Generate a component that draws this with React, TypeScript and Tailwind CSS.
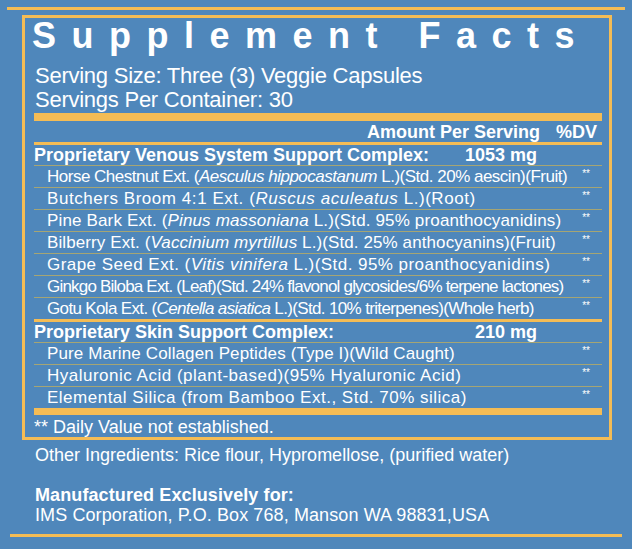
import React from "react";

type Part = { t: string; i?: boolean };

type Ingredient = {
  parts: Part[];
  track: string;
};

const venous: Ingredient[] = [
  {
    parts: [
      { t: "Horse Chestnut Ext. (" },
      { t: "Aesculus hippocastanum", i: true },
      { t: " L.)(Std. 20% aescin)(Fruit)" },
    ],
    track: "tracking-[-0.5px]",
  },
  {
    parts: [
      { t: "Butchers Broom 4:1 Ext. (" },
      { t: "Ruscus aculeatus", i: true },
      { t: " L.)(Root)" },
    ],
    track: "tracking-[0.55px]",
  },
  {
    parts: [
      { t: "Pine Bark Ext. (" },
      { t: "Pinus massoniana", i: true },
      { t: " L.)(Std. 95% proanthocyanidins)" },
    ],
    track: "tracking-[0.15px]",
  },
  {
    parts: [
      { t: "Bilberry Ext. (" },
      { t: "Vaccinium myrtillus", i: true },
      { t: " L.)(Std. 25% anthocyanins)(Fruit)" },
    ],
    track: "tracking-[0.1px]",
  },
  {
    parts: [
      { t: "Grape Seed Ext. (" },
      { t: "Vitis vinifera", i: true },
      { t: " L.)(Std. 95% proanthocyanidins)" },
    ],
    track: "tracking-[0.45px]",
  },
  {
    parts: [
      { t: "Ginkgo Biloba Ext. (Leaf)(Std. 24% flavonol glycosides/6% terpene lactones)" },
    ],
    track: "tracking-[-0.8px]",
  },
  {
    parts: [
      { t: "Gotu Kola Ext. (" },
      { t: "Centella asiatica", i: true },
      { t: " L.)(Std. 10% triterpenes)(Whole herb)" },
    ],
    track: "tracking-[-0.65px]",
  },
];

const skin: Ingredient[] = [
  {
    parts: [{ t: "Pure Marine Collagen Peptides (Type I)(Wild Caught)" }],
    track: "tracking-[0.12px]",
  },
  {
    parts: [{ t: "Hyaluronic Acid (plant-based)(95% Hyaluronic Acid)" }],
    track: "tracking-[0.5px]",
  },
  {
    parts: [{ t: "Elemental Silica (from Bamboo Ext., Std. 70% silica)" }],
    track: "tracking-[0.5px]",
  },
];

const IngredientRow = ({
  item,
  last,
}: {
  item: Ingredient;
  last?: boolean;
}) => {
  return (
    <div
      className={
        last
          ? "flex h-[21px] items-center"
          : "flex h-[22px] items-center border-b border-[#a5a574]"
      }
    >
      <p className={`pl-[13px] text-[17px] leading-none whitespace-nowrap ${item.track}`}>
        {item.parts.map((p, idx) =>
          p.i ? (
            <em key={idx} className="italic">
              {p.t}
            </em>
          ) : (
            <span key={idx}>{p.t}</span>
          )
        )}
      </p>
      <span className="ml-auto mr-[12px] text-[10px] leading-none -translate-y-[3px]">
        **
      </span>
    </div>
  );
};

const GroupHeader = ({ name, amount }: { name: string; amount: string }) => {
  return (
    <div className="flex h-[21px] items-center border-b border-[#a5a574] font-bold text-[18px] leading-none">
      <p>{name}</p>
      <p className="ml-auto mr-[65px]">{amount}</p>
    </div>
  );
};

export default function App() {
  return (
    <div className="w-[632px] h-[549px] bg-[#4f87bb] text-white font-['Liberation_Sans',Arial,sans-serif] pt-[7px] overflow-hidden">
      <div className="mx-[7px] h-[3px] bg-[#f4bc55]" />

      <div className="ml-[22px] mt-[5px] w-[590px] border-[3px] border-[#f4bc55] pl-[9px] pr-[7px]">
        <h1 className="-ml-[2px] text-[36px] font-bold leading-none tracking-[15.5px]">
          Supplement Facts
        </h1>
        <p className="pl-[1px] mt-[10px] text-[22px] leading-[24px] tracking-[-0.25px]">
          Serving Size: Three (3) Veggie Capsules
        </p>
        <p className="pl-[1px] text-[22px] leading-[24px] tracking-[-0.25px]">
          Servings Per Container: 30
        </p>

        <div className="mt-[1px] h-[8px] bg-[#f4bc55]" />

        <div className="flex h-[21px] items-center font-bold text-[18px] leading-none">
          <p className="ml-auto">Amount Per Serving</p>
          <p className="ml-[16px] mr-[5px]">%DV</p>
        </div>
        <div className="h-[3px] bg-[#f4bc55]" />

        <GroupHeader
          name="Proprietary Venous System Support Complex:"
          amount="1053 mg"
        />
        {venous.map((item, idx) => (
          <IngredientRow
            key={idx}
            item={item}
            last={idx === venous.length - 1}
          />
        ))}
        <div className="h-[3px] bg-[#f4bc55]" />

        <GroupHeader name="Proprietary Skin Support Complex:" amount="210 mg" />
        {skin.map((item, idx) => (
          <IngredientRow
            key={idx}
            item={item}
            last={idx === skin.length - 1}
          />
        ))}
        <div className="h-[7px] bg-[#f4bc55]" />

        <p className="h-[22px] pt-[3px] text-[18px] leading-none">
          ** Daily Value not established.
        </p>
      </div>

      <p className="ml-[35px] mt-[6px] text-[18px] leading-none">
        Other Ingredients: Rice flour, Hypromellose, (purified water)
      </p>

      <div className="ml-[35px] mt-[21px] text-[18px] leading-[20px] tracking-[0.1px]">
        <p className="font-bold">Manufactured Exclusively for:</p>
        <p>IMS Corporation, P.O. Box 768, Manson WA 98831,USA</p>
      </div>

      <div className="mx-[10px] mt-[9px] h-[3px] bg-[#f4bc55]" />
    </div>
  );
}
